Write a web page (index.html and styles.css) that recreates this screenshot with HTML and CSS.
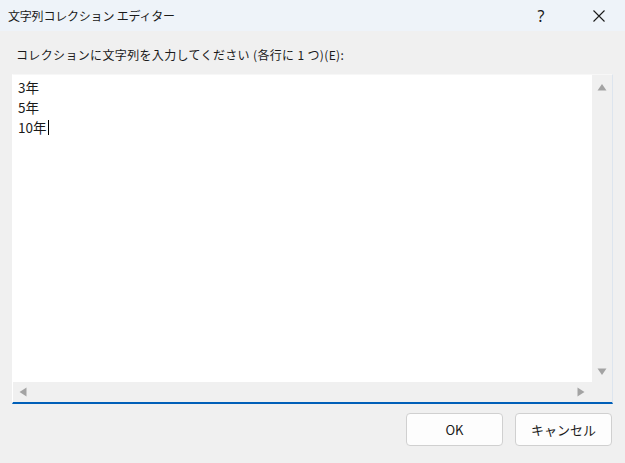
FILE: index.html
```html
<!DOCTYPE html>
<html lang="ja">
<head>
<meta charset="utf-8">
<title>文字列コレクション エディター</title>
<link rel="stylesheet" href="styles.css">
</head>
<body>
<div class="window">
  <div class="titlebar">
    <div class="title">文字列コレクション エディター</div>
    <div class="caption">
      <div class="cap-btn help">?</div>
      <div class="cap-btn close">
        <svg width="12" height="12" viewBox="0 0 12 12"><path d="M0.5 0.5 L11.5 11.5 M11.5 0.5 L0.5 11.5" stroke="#1a1a1a" stroke-width="1.1" fill="none"/></svg>
      </div>
    </div>
  </div>
  <div class="content">
    <div class="label">コレクションに文字列を入力してください (各行に 1 つ)(E):</div>
    <div class="editor">
      <div class="text">
        <div class="line">3年</div>
        <div class="line">5年</div>
        <div class="line">10年<span class="caret"></span></div>
      </div>
      <div class="vscroll">
        <svg width="10" height="8" viewBox="0 0 10 8"><path d="M5 1 L9.5 7.5 L0.5 7.5 Z" fill="#a3a3a3"/></svg>
        <svg width="10" height="8" viewBox="0 0 10 8"><path d="M0.5 0.5 L9.5 0.5 L5 7 Z" fill="#a3a3a3"/></svg>
      </div>
      <div class="hscroll">
        <svg width="8" height="10" viewBox="0 0 8 10"><path d="M0.5 5 L7.5 0.5 L7.5 9.5 Z" fill="#a3a3a3"/></svg>
        <svg width="8" height="10" viewBox="0 0 8 10"><path d="M7.5 5 L0.5 0.5 L0.5 9.5 Z" fill="#a3a3a3"/></svg>
      </div>
      <div class="corner"></div>
    </div>
    <div class="buttons">
      <div class="btn">OK</div>
      <div class="btn">キャンセル</div>
    </div>
  </div>
</div>
</body>
</html>
```

FILE: styles.css
```css
html, body {
  margin: 0;
  padding: 0;
}
body {
  width: 625px;
  height: 463px;
  background: #f0f0f0;
  font-family: "Noto Sans CJK JP", "Noto Sans", sans-serif;
  color: #1a1a1a;
  overflow: hidden;
}
.window {
  display: flex;
  flex-direction: column;
  height: 463px;
}
.titlebar {
  height: 31px;
  background: #eef3f9;
  display: flex;
  align-items: center;
  justify-content: space-between;
}
.title {
  padding-left: 8px;
  font-size: 12px;
  line-height: 31px;
  letter-spacing: -0.2px;
}
.caption {
  display: flex;
  height: 31px;
  padding-right: 3px;
}
.cap-btn {
  display: flex;
  align-items: center;
  justify-content: center;
  height: 31px;
}
.help {
  width: 46px;
  font-size: 16px;
  font-family: "Noto Sans", sans-serif;
  margin-right: 12px;
}
.close {
  width: 46px;
}
.content {
  padding: 0 12px;
  display: flex;
  flex-direction: column;
}
.label {
  margin-top: 14px;
  padding-left: 4px;
  height: 20px;
  line-height: 20px;
  font-size: 12px;
  letter-spacing: 0.35px;
}
.editor {
  margin-top: 9px;
  height: 327px;
  display: grid;
  grid-template-columns: 1fr 20px;
  grid-template-rows: 1fr 20px;
  background: #ffffff;
  border-top: 1px solid #f7f7f7;
  border-left: 1px solid #ffffff;
  border-right: 1px solid #dde5ee;
  border-bottom: 2px solid #005fb8;
}
.text {
  padding: 2px 0 0 5px;
  font-size: 13.5px;
  line-height: 20px;
  border-bottom-right-radius: 4px;
  background: #ffffff;
}
.line {
  height: 20px;
  display: flex;
  align-items: center;
}
.caret {
  display: inline-block;
  width: 1px;
  height: 15px;
  background: #000000;
  margin-left: 1px;
}
.vscroll {
  background: #f0f0f0;
  display: flex;
  flex-direction: column;
  justify-content: space-between;
  align-items: center;
  padding: 8px 0 6px 0;
}
.hscroll {
  background: #f0f0f0;
  display: flex;
  justify-content: space-between;
  align-items: center;
  padding: 0 7px 0 6px;
}
.corner {
  background: #f0f0f0;
}
.buttons {
  margin-top: 9px;
  display: flex;
  justify-content: flex-end;
  gap: 12px;
  padding-right: 1px;
}
.btn {
  width: 95px;
  height: 31px;
  border: 1px solid #d0d0d0;
  border-radius: 4px;
  background: #fdfdfd;
  display: flex;
  align-items: center;
  justify-content: center;
  font-size: 13px;
}
```
